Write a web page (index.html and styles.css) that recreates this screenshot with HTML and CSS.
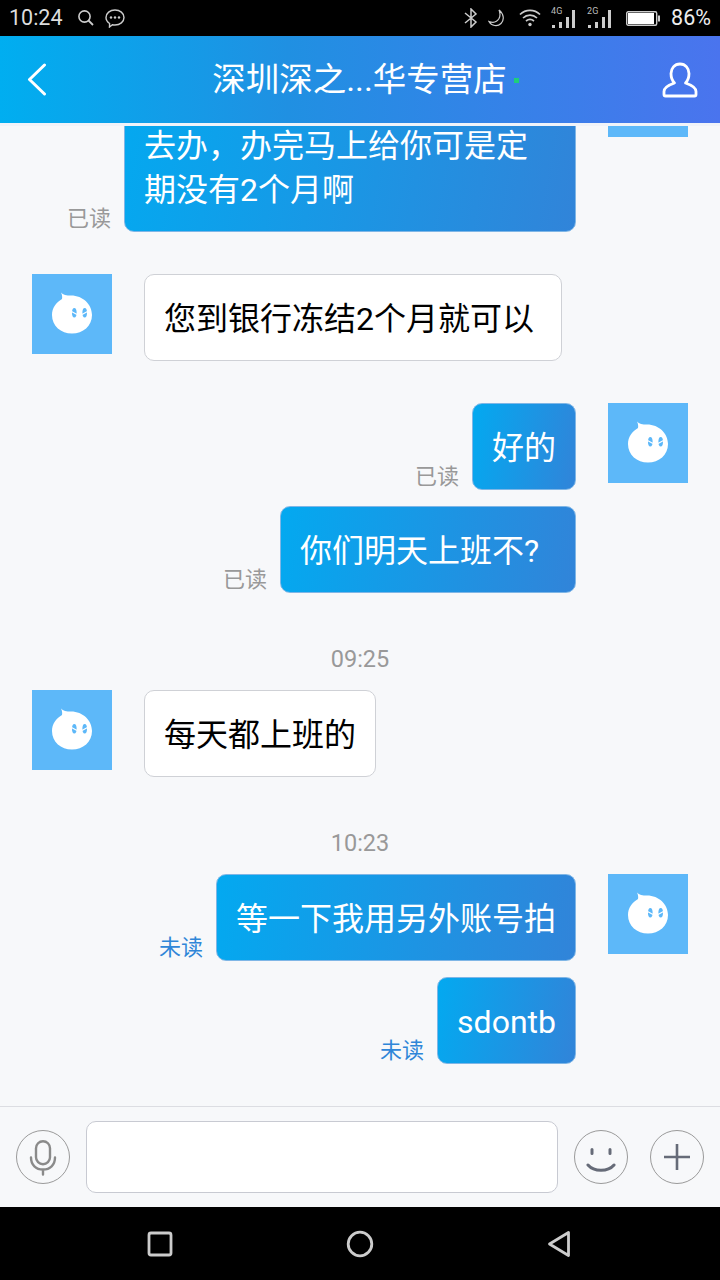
FILE: index.html
```html
<!DOCTYPE html>
<html lang="zh-CN">
<head>
<meta charset="utf-8">
<title>Chat</title>
<link rel="stylesheet" href="styles.css">
</head>
<body>
<svg class="defs" width="0" height="0" aria-hidden="true">
  <symbol id="blob" viewBox="0 0 80 80">
    <rect width="80" height="80" fill="#5db8f9"/>
    <path d="M29 18.500 C31 21 34.500 21.500 39 21.500 C51 21.500 60 30.500 60 41 C60 52 51 59.500 40 59.500 C29 59.500 20 52 20 41 C20 34 24 28.500 30 25 C30.500 23 30 20.500 29 18.500Z" fill="#fff"/>
    <ellipse cx="42.300" cy="38.700" rx="2.300" ry="4.700" fill="#5db8f9"/>
    <ellipse cx="52.700" cy="38.700" rx="2.300" ry="4.700" fill="#5db8f9"/>
    <path d="M39.500 37.500 L45 40.500 M55.500 37.500 L50 40.500" stroke="#fff" stroke-width="1.300"/>
  </symbol>
</svg>
<div class="phone">
  <div class="status">
    <div class="status-group">
      <span class="clock">10:24</span>
      <svg class="ic-search" width="17" height="18" viewBox="0 0 17 18"><circle cx="7.5" cy="7.5" r="5.6" fill="none" stroke="#ccc" stroke-width="1.6"/><path d="M11.5 11.5 L16 16" stroke="#ccc" stroke-width="1.8"/></svg>
      <svg class="ic-chat" width="20" height="19" viewBox="0 0 20 19"><path d="M10 1 C15 1 19 4.2 19 8.5 C19 12.8 15 16 10 16 C9 16 8.2 15.9 7.4 15.7 L4.5 18 L4.6 14.5 C2.4 13 1 11 1 8.5 C1 4.2 5 1 10 1Z" fill="none" stroke="#ccc" stroke-width="1.4"/><circle cx="6" cy="8.5" r="1.2" fill="#ccc"/><circle cx="10" cy="8.5" r="1.2" fill="#ccc"/><circle cx="14" cy="8.5" r="1.2" fill="#ccc"/></svg>
    </div>
    <div class="status-group status-right">
      <svg width="14" height="20" viewBox="0 0 14 20"><path d="M1 5 L12 14 L7 19 V1 L12 6 L1 15" fill="none" stroke="#ccc" stroke-width="1.5"/></svg>
      <svg class="ic-moon" width="18" height="18" viewBox="0 0 18 18"><path d="M11 1 C16 5 16.5 11 13 14.500 C9.500 18 3.500 17 1 12.500 C5 14 9 13 11 9.500 C12.300 7 12.300 4 11 1Z" fill="none" stroke="#ccc" stroke-width="1.2"/></svg>
      <svg class="ic-wifi" width="22" height="18" viewBox="0 0 22 18"><path d="M1 5.500 C6.500 0 15.500 0 21 5.500 M4 9 C8 5.200 14 5.200 18 9 M7 12 C9.500 10 12.500 10 15 12" fill="none" stroke="#ccc" stroke-width="1.7"/><circle cx="11" cy="15.500" r="1.700" fill="#ccc"/></svg>
      <div class="signal">
        <span class="net">4G</span>
        <svg width="24" height="18" viewBox="0 0 24 18"><path d="M1 15h3v3H1z M8 12h3v6H8z M15 7h3v11h-3z" fill="#ccc"/><path d="M21 0h3v18h-3z" fill="#ccc"/></svg>
      </div>
      <div class="signal">
        <span class="net">2G</span>
        <svg width="24" height="18" viewBox="0 0 24 18"><path d="M1 15h3v3H1z M8 12h3v6H8z M15 7h3v11h-3z" fill="#ccc"/><path d="M21 0h3v18h-3z" fill="#ccc"/></svg>
      </div>
      <svg class="ic-batt" width="34" height="15" viewBox="0 0 34 15"><rect x="0.700" y="0.700" width="30" height="13.600" rx="1.500" fill="none" stroke="#ccc" stroke-width="1.400"/><rect x="2" y="2" width="26" height="11" fill="#fff"/><rect x="32" y="4.500" width="2" height="6" fill="#ccc"/></svg>
      <span class="pct">86%</span>
    </div>
  </div>

  <header class="header">
    <svg class="back" width="20" height="33" viewBox="0 0 20 33"><path d="M17.500 2 L2.500 16.500 L17.500 31" fill="none" stroke="#fff" stroke-width="3" stroke-linecap="round" stroke-linejoin="round"/></svg>
    <div class="title-wrap">
      <span class="title">深圳深之...华专营店</span>
      <span class="dot"></span>
    </div>
    <svg class="person" width="36" height="36" viewBox="0 0 36 36"><path d="M18 2 C23.500 2 27 6.500 27 11.500 C27 15.500 25.500 19 23.500 21 C28 22.500 34 25.500 34 29.500 V32.500 C34 33.500 33.500 34 32.500 34 H3.500 C2.500 34 2 33.500 2 32.500 V29.500 C2 25.500 8 22.500 12.500 21 C10.500 19 9 15.500 9 11.500 C9 6.500 12.500 2 18 2Z" fill="none" stroke="#fff" stroke-width="2.800" stroke-linejoin="round"/></svg>
  </header>

  <main class="chat">
    <div class="row row-me">
      <span class="receipt">已读</span>
      <div class="bubble bubble-me">这几天都要上班，没有时间去办，办完马上给你可是定期没有2个月啊</div>
      <svg class="avatar"><use href="#blob"/></svg>
    </div>
    <div class="row row-them">
      <svg class="avatar"><use href="#blob"/></svg>
      <div class="bubble bubble-them">您到银行冻结2个月就可以&nbsp;</div>
    </div>
    <div class="row row-me">
      <span class="receipt">已读</span>
      <div class="bubble bubble-me">好的</div>
      <svg class="avatar"><use href="#blob"/></svg>
    </div>
    <div class="row row-me row-cont">
      <span class="receipt">已读</span>
      <div class="bubble bubble-me bubble-wide">你们明天上班不?&nbsp;&nbsp;</div>
      <div class="avatar-gap"></div>
    </div>
    <div class="time">09:25</div>
    <div class="row row-them row-after-time">
      <svg class="avatar"><use href="#blob"/></svg>
      <div class="bubble bubble-them">每天都上班的</div>
    </div>
    <div class="time">10:23</div>
    <div class="row row-me row-after-time">
      <span class="receipt unread">未读</span>
      <div class="bubble bubble-me">等一下我用另外账号拍</div>
      <svg class="avatar"><use href="#blob"/></svg>
    </div>
    <div class="row row-me row-cont">
      <span class="receipt unread">未读</span>
      <div class="bubble bubble-me">sdontb</div>
      <div class="avatar-gap"></div>
    </div>
  </main>

  <footer class="composer">
    <button class="round" type="button" aria-label="voice">
      <svg width="28" height="38" viewBox="0 0 28 38"><rect x="7" y="3.200" width="14" height="23" rx="7" fill="none" stroke="#8a8a8a" stroke-width="2.400"/><path d="M2 19.500 C2 27 7 31.500 14 31.500 C21 31.500 26 27 26 19.500 M14 31.500 V36.500" fill="none" stroke="#8a8a8a" stroke-width="2.400" stroke-linecap="round"/></svg>
    </button>
    <div class="input"></div>
    <button class="round round-smile" type="button" aria-label="emoji">
      <svg width="30" height="32" viewBox="0 0 30 32"><path d="M6 8.500 V12.500 M24 8.500 V12.500" stroke="#666b78" stroke-width="3" stroke-linecap="round"/><path d="M2 24 C8 31 22 31 28 24" fill="none" stroke="#666b78" stroke-width="3" stroke-linecap="round"/></svg>
    </button>
    <button class="round" type="button" aria-label="more">
      <svg width="28" height="28" viewBox="0 0 28 28"><path d="M14 1 V27 M1 14 H27" stroke="#666b78" stroke-width="2.600"/></svg>
    </button>
  </footer>

  <nav class="nav">
    <svg width="26" height="26" viewBox="0 0 26 26"><rect x="2" y="2" width="22" height="22" rx="2" fill="none" stroke="#ccc" stroke-width="2.800"/></svg>
    <svg width="28" height="28" viewBox="0 0 28 28"><circle cx="14" cy="14" r="11.800" fill="none" stroke="#ccc" stroke-width="2.800"/></svg>
    <svg width="24" height="28" viewBox="0 0 24 28"><path d="M2.500 14 L21.500 2.500 V25.500Z" fill="none" stroke="#ccc" stroke-width="2.800" stroke-linejoin="round"/></svg>
  </nav>
</div>
</body>
</html>
```

FILE: styles.css
```css
* { box-sizing: border-box; }
html, body { margin: 0; padding: 0; }
body {
  width: 720px;
  height: 1280px;
  overflow: hidden;
  font-family: Roboto, "Noto Sans CJK SC", sans-serif;
  background: #000;
}
.defs { display: block; height: 0; }
.phone {
  width: 720px;
  height: 1280px;
  display: flex;
  flex-direction: column;
  background: #f7f8fa;
}
.status {
  height: 36px;
  flex: none;
  background: #000;
  color: #ddd;
  display: flex;
  align-items: center;
  justify-content: space-between;
  padding: 0 9px;
}
.status-group { display: flex; align-items: center; }
.clock { font-size: 21.5px; line-height: 36px; margin-right: 14px; }
.ic-chat { margin-left: 11px; }
.status-right { gap: 10px; }
.ic-wifi { margin-left: 3px; }
.signal { position: relative; width: 26px; height: 20px; display: flex; align-items: flex-end; }
.net {
  position: absolute;
  left: 0;
  top: -2px;
  font-size: 9px;
  line-height: 10px;
  color: #bbb;
}
.ic-batt { margin-left: 3px; }
.pct { font-size: 21.5px; line-height: 36px; color: #eee; margin-left: 1px; }

.header {
  height: 90px;
  flex: none;
  background: linear-gradient(90deg, #00aef0 0%, #2090e2 40%, #4a74ee 100%) top / 100% 87px no-repeat;
  border-bottom: 3px solid #f0f3f9;
  display: flex;
  align-items: center;
  justify-content: space-between;
  padding: 0 22px 0 27px;
}
.title-wrap { display: flex; align-items: center; margin-left: 22px; }
.title { font-size: 33.5px; line-height: 44px; color: #fff; }
.dot { width: 5px; height: 5px; background: #1fce7a; margin-left: 7px; margin-top: 2px; }

.chat {
  flex: 1;
  min-height: 0;
  overflow: hidden;
  display: flex;
  flex-direction: column;
  justify-content: flex-end;
  padding: 0 32px 42px;
}
.row { display: flex; align-items: flex-start; margin-top: 42px; flex: none; }
.row-me { justify-content: flex-end; }
.row-them { justify-content: flex-start; }
.row-cont { margin-top: 16px; }
.row-after-time { margin-top: 15px; }
.avatar { width: 80px; height: 80px; flex: none; display: block; }
.avatar-gap { width: 80px; flex: none; }
.row-me .avatar, .row-me .avatar-gap { margin-left: 32px; }
.row-them .avatar { margin-right: 32px; }
.bubble {
  max-width: 452px;
  border-radius: 10px;
  padding: 22px 19px 19px;
  font-size: 32px;
  line-height: 44px;
}
.bubble-wide { padding-right: 20px; }
.bubble-me {
  color: #fff;
  background: linear-gradient(100deg, #03a9f0 0%, #3184d9 100%);
  border: 1px solid #7fb6e6;
}
.bubble-them {
  color: #000;
  background: #fff;
  border: 1px solid #cfd1d6;
}
.receipt {
  align-self: flex-end;
  font-size: 22px;
  line-height: 26px;
  color: #999;
  margin: 0 13px 0 0;
}
.unread { color: #2f86d8; }
.time {
  flex: none;
  margin-top: 50px;
  height: 32px;
  line-height: 32px;
  text-align: center;
  font-size: 23.5px;
  color: #999;
}

.composer {
  height: 101px;
  flex: none;
  background: #f7f8fa;
  border-top: 1px solid #dcdde2;
  display: flex;
  align-items: center;
  padding: 0 16px;
}
.round {
  width: 54px;
  height: 54px;
  flex: none;
  border: 1px solid #9a9a9a;
  border-radius: 50%;
  background: transparent;
  padding: 0;
  display: flex;
  align-items: center;
  justify-content: center;
}
.input {
  width: 472px;
  height: 72px;
  margin: 0 16px;
  background: #fff;
  border: 1px solid #c8cad2;
  border-radius: 10px;
}
.round-smile { margin-right: 22px; }

.nav {
  height: 73px;
  flex: none;
  background: #000;
  display: flex;
  align-items: center;
  padding: 1px 0 0 147px;
  gap: 173px;
}
```
